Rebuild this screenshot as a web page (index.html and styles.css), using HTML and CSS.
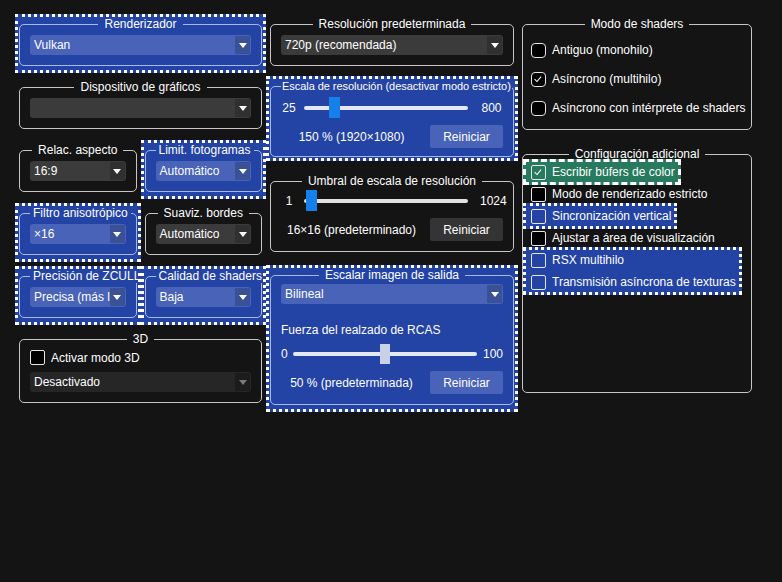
FILE: index.html
```html
<!DOCTYPE html>
<html lang="es">
<head>
<meta charset="utf-8">
<title>Configuración de gráficos</title>
<link rel="stylesheet" href="styles.css">
</head>
<body>
<div class="page">
  <div class="col col-left">
    <div class="cell hl">
      <fieldset class="group"><legend>Renderizador</legend>
        <div class="combo"><span class="ctext">Vulkan</span><span class="carrow"><i class="tri"></i></span></div>
      </fieldset>
    </div>
    <div class="cell">
      <fieldset class="group"><legend>Dispositivo de gráficos</legend>
        <div class="combo"><span class="ctext"></span><span class="carrow"><i class="tri"></i></span></div>
      </fieldset>
    </div>
    <div class="pair">
      <div class="cell">
        <fieldset class="group"><legend>Relac. aspecto</legend>
          <div class="combo"><span class="ctext">16:9</span><span class="carrow"><i class="tri"></i></span></div>
        </fieldset>
      </div>
      <div class="cell hl">
        <fieldset class="group"><legend class="lg-tight">Limit. fotogramas</legend>
          <div class="combo"><span class="ctext">Automático</span><span class="carrow"><i class="tri"></i></span></div>
        </fieldset>
      </div>
    </div>
    <div class="pair">
      <div class="cell hl">
        <fieldset class="group"><legend class="lg-tight">Filtro anisotrópico</legend>
          <div class="combo"><span class="ctext">×16</span><span class="carrow"><i class="tri"></i></span></div>
        </fieldset>
      </div>
      <div class="cell">
        <fieldset class="group"><legend>Suaviz. bordes</legend>
          <div class="combo"><span class="ctext">Automático</span><span class="carrow"><i class="tri"></i></span></div>
        </fieldset>
      </div>
    </div>
    <div class="pair">
      <div class="cell hl">
        <fieldset class="group"><legend class="lg-tight">Precisión de ZCULL</legend>
          <div class="combo"><span class="ctext">Precisa (más lenta)</span><span class="carrow"><i class="tri"></i></span></div>
        </fieldset>
      </div>
      <div class="cell hl">
        <fieldset class="group"><legend class="lg-tight">Calidad de shaders</legend>
          <div class="combo"><span class="ctext">Baja</span><span class="carrow"><i class="tri"></i></span></div>
        </fieldset>
      </div>
    </div>
    <div class="cell">
      <fieldset class="group g3d"><legend>3D</legend>
        <div class="cb cb-3d"><span class="box"></span><span>Activar modo 3D</span></div>
        <div class="combo combo-disabled"><span class="ctext">Desactivado</span><span class="carrow"><i class="tri"></i></span></div>
      </fieldset>
    </div>
  </div>

  <div class="col col-mid">
    <div class="cell">
      <fieldset class="group"><legend>Resolución predeterminada</legend>
        <div class="combo"><span class="ctext">720p (recomendada)</span><span class="carrow"><i class="tri"></i></span></div>
      </fieldset>
    </div>
    <div class="cell hl tight m-escala">
      <fieldset class="group g-escala"><legend class="lg-long">Escala de resolución (desactivar modo estricto)</legend>
        <div class="slider">
          <span class="smin">25</span>
          <div class="track"><span class="thumb" style="left:calc((100% - 11px) * 0.161)"></span></div>
          <span class="smax">800</span>
        </div>
        <div class="valrow">
          <span class="vlabel">150 % (1920×1080)</span>
          <span class="btn">Reiniciar</span>
        </div>
      </fieldset>
    </div>
    <div class="cell m-umbral">
      <fieldset class="group g-umbral"><legend>Umbral de escala de resolución</legend>
        <div class="slider">
          <span class="smin">1</span>
          <div class="track"><span class="thumb" style="left:calc((100% - 11px) * 0.015)"></span></div>
          <span class="smax">1024</span>
        </div>
        <div class="valrow">
          <span class="vlabel">16×16 (predeterminado)</span>
          <span class="btn">Reiniciar</span>
        </div>
      </fieldset>
    </div>
    <div class="cell hl m-escalar">
      <fieldset class="group g-escalar"><legend>Escalar imagen de salida</legend>
        <div class="combo"><span class="ctext">Bilineal</span><span class="carrow"><i class="tri"></i></span></div>
        <div class="sublabel">Fuerza del realzado de RCAS</div>
        <div class="slider slider-rcas">
          <span class="smin">0</span>
          <div class="track"><span class="thumb thumb-light" style="left:calc((100% - 10px) * 0.5)"></span></div>
          <span class="smax">100</span>
        </div>
        <div class="valrow">
          <span class="vlabel">50 % (predeterminada)</span>
          <span class="btn">Reiniciar</span>
        </div>
      </fieldset>
    </div>
  </div>

  <div class="col col-right">
    <div class="cell">
      <fieldset class="group g-shaders"><legend>Modo de shaders</legend>
        <div class="cb"><span class="box round"></span><span>Antiguo (monohilo)</span></div>
        <div class="cb"><span class="box round"><svg viewBox="0 0 15 15" width="13" height="13"><polyline points="3,7 5.8,9.8 10.5,4.2" fill="none" stroke="#fff" stroke-width="1.2"/></svg></span><span>Asíncrono (multihilo)</span></div>
        <div class="cb"><span class="box round"></span><span>Asíncrono con intérprete de shaders</span></div>
      </fieldset>
    </div>
    <div class="cell m-config">
      <fieldset class="group g-config"><legend>Configuración adicional</legend>
        <div class="rhl rhl-green">
          <div class="cb"><span class="box"><svg viewBox="0 0 15 15" width="13" height="13"><polyline points="3,7 5.8,9.8 10.5,4.2" fill="none" stroke="#fff" stroke-width="1.2"/></svg></span><span>Escribir búfers de color</span></div>
        </div>
        <div class="cb"><span class="box"></span><span>Modo de renderizado estricto</span></div>
        <div class="rhl">
          <div class="cb"><span class="box"></span><span>Sincronización vertical</span></div>
        </div>
        <div class="cb"><span class="box"></span><span>Ajustar a área de visualización</span></div>
        <div class="rhl">
          <div class="cb"><span class="box"></span><span>RSX multihilo</span></div>
          <div class="cb"><span class="box"></span><span>Transmisión asíncrona de texturas</span></div>
        </div>
      </fieldset>
    </div>
  </div>
</div>
</body>
</html>
```

FILE: styles.css
```css
* { box-sizing: border-box; }
html, body { margin: 0; height: 100%; }
body {
  background: #141414;
  color: #fff;
  font-family: "Liberation Sans", Arial, sans-serif;
  font-size: 12px;
  line-height: 14px;
}
.page {
  display: grid;
  grid-template-columns: 251px 252px 238px;
  align-items: start;
  padding: 14px 0 0 15px;
}
.col { display: flex; flex-direction: column; min-width: 0; }
.col-left { gap: 4px; }

.cell { border: 3px solid transparent; padding: 0 1px 4px; min-width: 0; }
.hl { border: 3px dotted #fff; background: #2343a5; }
.tight { padding-bottom: 1px; }
.pair { display: grid; grid-template-columns: minmax(0, 1fr) minmax(0, 1fr); }

.group {
  margin: 0;
  min-width: 0;
  border: 1px solid #c6c6c6;
  border-radius: 5px;
  padding: 4px 10px 10px;
}
.hl .group { border-color: #a9b8ec; }
.group > legend {
  margin: 0 auto;
  padding: 0 6px;
  line-height: 14px;
  white-space: nowrap;
}
.group > legend.lg-tight { padding: 0 3px; }
.group > legend.lg-long { font-size: 11px; padding: 0 1px; letter-spacing: -0.05px; }

/* combobox */
.combo {
  display: flex;
  align-items: center;
  height: 20px;
  background: #3b3b3b;
  border-radius: 3px;
  overflow: hidden;
  min-width: 0;
}
.hl .combo { background: #4863b7; }
.ctext {
  flex: 1;
  min-width: 0;
  padding-left: 4px;
  white-space: nowrap;
  overflow: hidden;
}
.carrow {
  width: 15px;
  height: 18px;
  flex: none;
  margin-right: 1px;
  display: flex;
  align-items: center;
  justify-content: center;
  background: rgba(0, 0, 0, 0.18);
}
.tri {
  width: 0;
  height: 0;
  border-left: 4.5px solid transparent;
  border-right: 4.5px solid transparent;
  border-top: 5px solid #fff;
}
.combo-disabled { background: #262626; }
.combo-disabled .carrow { background: rgba(0, 0, 0, 0.25); }
.combo-disabled .tri { border-top-color: #7a7a7a; }

/* checkbox */
.cb { display: flex; align-items: center; gap: 6px; height: 22px; white-space: nowrap; }
.box {
  width: 15px;
  height: 15px;
  flex: none;
  border: 1px solid #e6e6e6;
  border-radius: 2px;
  background: #000;
  display: flex;
  align-items: center;
  justify-content: center;
}
.box.round { border-radius: 4px; }
.box svg { display: block; }

.g3d { padding-top: 4px; }
.g3d .cb-3d { height: 15px; margin-bottom: 7px; }

/* middle column */
.m-escala { margin-top: 3px; }
.m-umbral { margin-top: 10px; }
.m-escalar { margin-top: 6px; }
.g-escala { padding-top: 4px; padding-bottom: 8px; }
.g-umbral { padding-top: 2px; }
.g-escalar { padding-top: 2px; }

.slider { display: flex; align-items: center; height: 21px; }
.smin { width: 16px; text-align: center; margin-right: 7px; }
.smax { width: 23px; text-align: center; margin-left: 12px; }
.track {
  flex: 1;
  height: 4px;
  border-radius: 2px;
  background: #e2e2e2;
  position: relative;
}
.hl .track { background: #e4e8f4; }
.thumb {
  position: absolute;
  top: 50%;
  width: 11px;
  height: 21px;
  margin-top: -10.5px;
  background: #1680ea;
}
.slider-rcas { height: 20px; margin-top: 7px; }
.slider-rcas .smin { width: auto; margin-right: 5px; }
.slider-rcas .smax { width: auto; margin-left: 6px; }
.thumb-light { width: 10px; height: 20px; margin-top: -10px; background: #c9d1ea; }

.valrow { display: flex; align-items: center; gap: 8px; margin-top: 7px; }
.vlabel { flex: 1; text-align: center; white-space: nowrap; }
.btn {
  width: 73px;
  height: 23px;
  display: flex;
  align-items: center;
  justify-content: center;
  background: #343434;
  border-radius: 2px;
}
.hl .btn { background: #4863b7; }
.sublabel { margin-top: 19px; }

/* right column */
.g-shaders { padding: 8px 8px 10px; display: flex; flex-direction: column; gap: 7px; }
.m-config { margin-top: 7px; }
.g-config { padding: 0 1px 99px; display: flex; flex-direction: column; align-items: flex-start; }
.g-config .cb { padding-left: 7px; }
.rhl {
  margin-left: 1px;
  padding-right: 4px;
  background: #2343a5;
  box-shadow: 0 0 0 2px #2343a5;
  outline: 3px dotted #fff;
  outline-offset: -1px;
}
.rhl .box { background: transparent; }
.g-config .rhl .cb { padding-left: 6px; }
.rhl-green {
  background: #287a5e;
  box-shadow: 0 0 0 2px #287a5e;
  outline-style: dashed;
}
```
